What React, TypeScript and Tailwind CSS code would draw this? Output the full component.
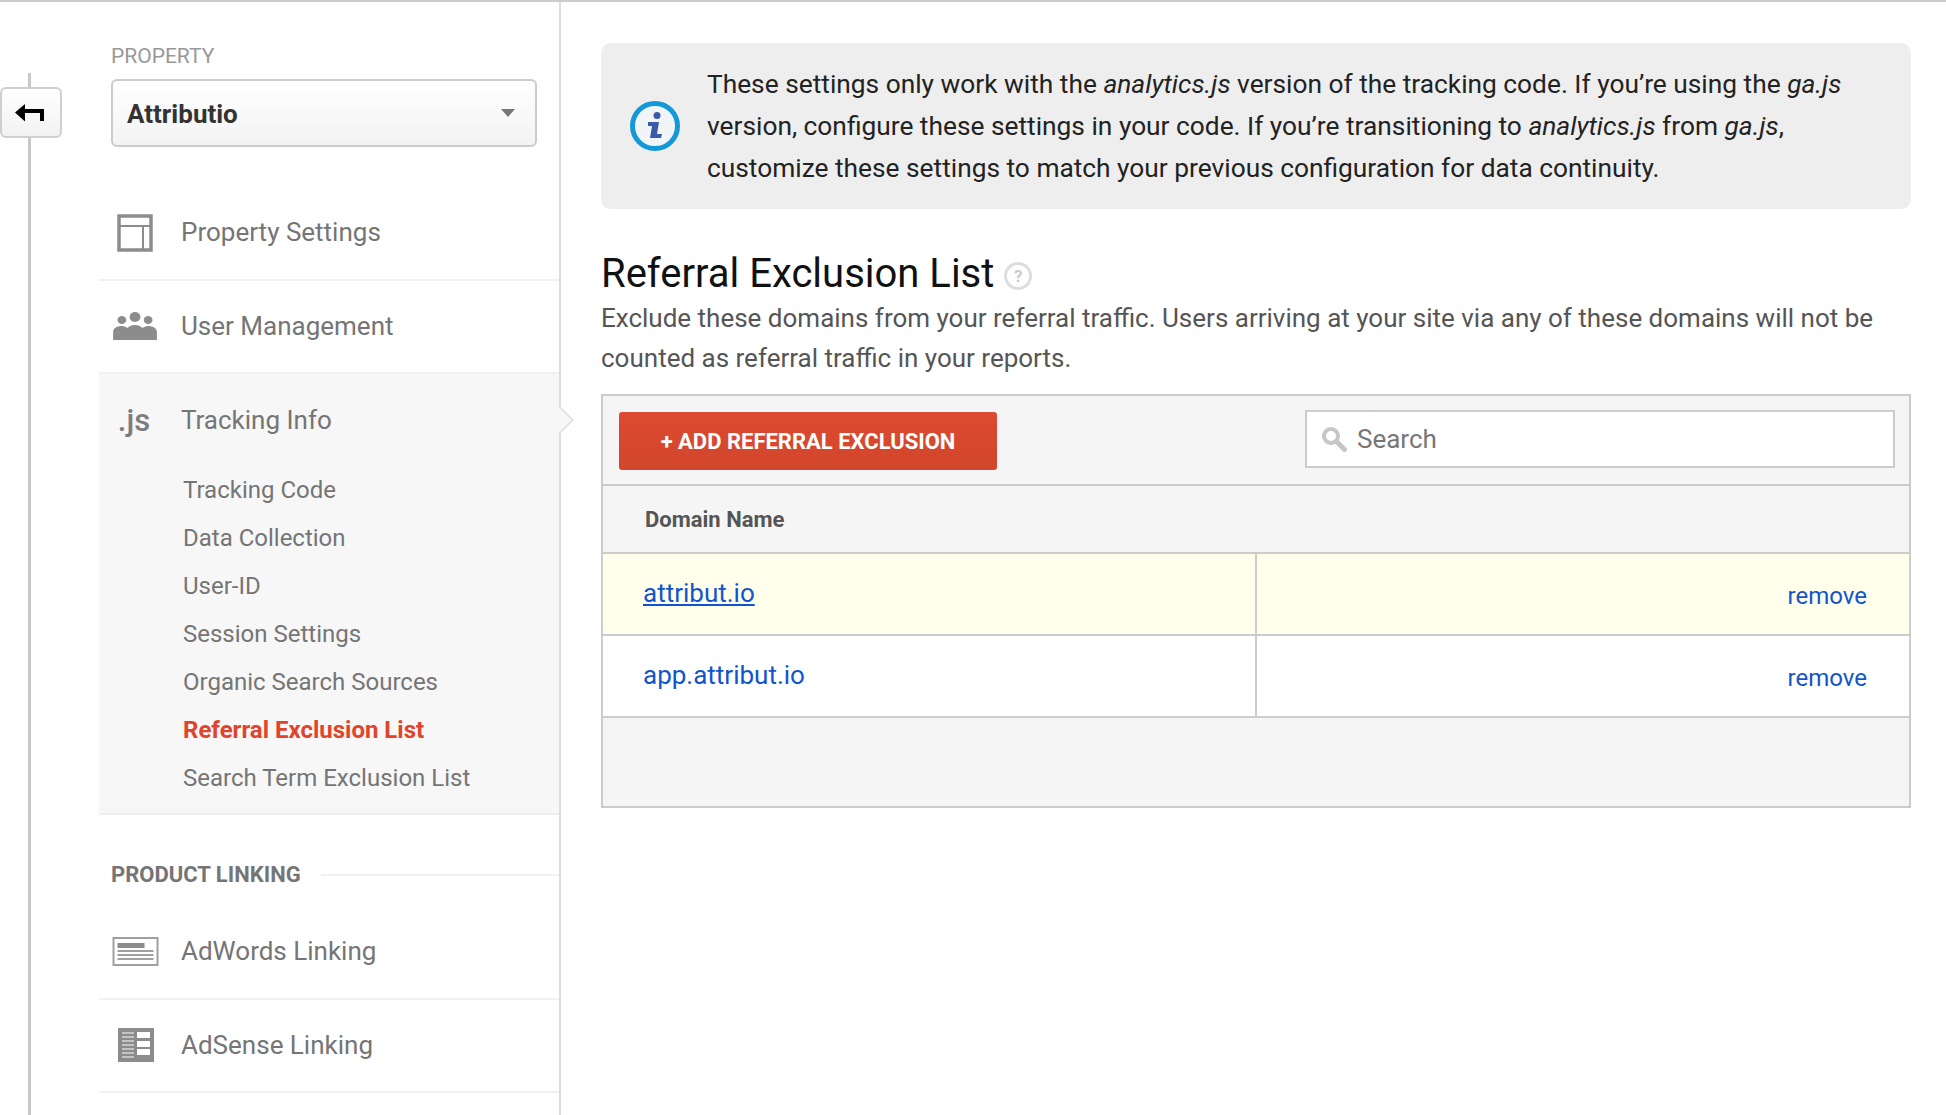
const font = { fontFamily: "Roboto, sans-serif" };

const subItems = [
  "Tracking Code",
  "Data Collection",
  "User-ID",
  "Session Settings",
  "Organic Search Sources",
  "Referral Exclusion List",
  "Search Term Exclusion List",
];

const BackArrow = () => (
  <svg width="31" height="20" viewBox="0 0 31 20" fill="#000" className="-ml-[3px]">
    <path d="M1 9.5 L11 1 V6 H30 V18 H26 V10 H11 V18.5 Z" />
  </svg>
);

const PropertyIcon = () => (
  <svg width="36" height="38" viewBox="0 0 36 38" fill="none" stroke="#8c8c8c" className="ml-[2px]">
    <rect x="2" y="2" width="32" height="34" strokeWidth="3.5" />
    <path d="M2 12 H34 M26 12 V36" strokeWidth="2" />
  </svg>
);

const UsersIcon = () => (
  <svg width="46" height="30" viewBox="0 0 42 30" preserveAspectRatio="none" fill="#8c8c8c" className="ml-[2px]">
    <circle cx="9" cy="9" r="4" />
    <circle cx="21" cy="6" r="5" />
    <circle cx="33" cy="9" r="4" />
    <path d="M1 29 V21 C1 17 5 15 9 15 C11 15 13 16 14 17 C16 15 18 14 21 14 C24 14 26 15 28 17 C29 16 31 15 33 15 C37 15 41 17 41 21 V29 Z" />
  </svg>
);

const AdWordsIcon = () => (
  <svg width="47" height="30" viewBox="0 0 46 30" fill="none" className="ml-[2px]">
    <rect x="1" y="1" width="44" height="27" fill="#fff" stroke="#a0a0a0" strokeWidth="2" />
    <rect x="5" y="6" width="27" height="5" fill="#8c8c8c" />
    <path d="M5 14 H41 M5 18 H41 M5 22 H41" stroke="#a0a0a0" strokeWidth="2" />
  </svg>
);

const AdSenseIcon = () => (
  <svg width="36" height="34" viewBox="0 0 36 34" className="ml-[4px]">
    <rect width="36" height="34" fill="#8c8c8c" />
    <path d="M4 5 H16 M4 9 H16 M4 13 H16 M4 17 H16 M4 21 H16 M4 25 H16 M4 29 H16" stroke="#c4c4c4" strokeWidth="2" />
    <rect x="19" y="4" width="13" height="6" fill="#fff" />
    <rect x="19" y="13" width="13" height="6" fill="#fff" />
    <rect x="19" y="21" width="13" height="6" fill="#fff" />
  </svg>
);

const InfoIcon = () => (
  <svg width="50" height="50" viewBox="0 0 50 50" fill="none">
    <circle cx="25" cy="25" r="22.5" fill="#f2f5f8" stroke="#1398d8" strokeWidth="5" />
    <circle cx="27" cy="14.5" r="3.5" fill="#3b5aa8" />
    <path d="M18 21 H29 L27 33 H32 L31 37 H20 L22 25 H18 Z" fill="#3b5aa8" />
  </svg>
);

const SearchIcon = () => (
  <svg width="26" height="26" viewBox="0 0 26 26" fill="none" stroke="#c6c6c6" strokeLinecap="round">
    <circle cx="10" cy="10" r="7" strokeWidth="4" />
    <path d="M16 16 L23.5 23.5" strokeWidth="5" />
  </svg>
);

const NavRow = ({ icon, label }: { icon: React.ReactNode; label: string }) => (
  <div className="flex h-[93.5px] items-center border-b-2 border-[#f1f1f1]">
    <div className="flex w-[70px] justify-center">{icon}</div>
    <span className="ml-[12px] text-[26px] text-[#757575]">{label}</span>
  </div>
);

export default function App() {
  return (
    <div className="flex h-[1115px] overflow-hidden border-t-2 border-[#cccccc] bg-white" style={font}>
      {/* back rail */}
      <div className="relative flex w-[99px] shrink-0 flex-col">
        <div className="ml-[28px] mt-[71px] w-[3px] flex-1 bg-[#c8c8c8]" />
        <button className="absolute left-0 top-[85px] flex h-[51px] w-[62px] items-center justify-center rounded-[6px] border-2 border-[#cfcfcf] bg-gradient-to-b from-white to-[#f2f2f2]">
          <BackArrow />
        </button>
      </div>

      {/* sidebar */}
      <aside className="relative w-[462px] shrink-0 border-r-2 border-[#dddddd]">
        <div className="pl-[12px] pt-[42px] text-[21px] leading-6 text-[#999999]">PROPERTY</div>
        <div className="ml-[12px] mt-[11px] flex h-[68px] w-[426px] items-center justify-between rounded-[6px] border-2 border-[#cccccc] bg-gradient-to-b from-white to-[#f3f3f3] pl-[14px] pr-[20px]">
          <span className="pt-[2px] text-[26px] font-bold text-[#333333]">Attributio</span>
          <span className="h-0 w-0 border-x-[7px] border-t-[8px] border-x-transparent border-t-[#777777]" />
        </div>

        <div className="mt-[40px]">
          <NavRow icon={<PropertyIcon />} label="Property Settings" />
          <NavRow icon={<UsersIcon />} label="User Management" />
        </div>

        <div className="relative h-[441px] border-b-2 border-[#eeeeee] bg-[#f7f7f7]">
          <div className="flex h-[92px] items-center">
            <div className="flex w-[70px] justify-center text-[31px] font-medium leading-none text-[#7d7d7d]">.js</div>
            <span className="ml-[12px] text-[26px] text-[#757575]">Tracking Info</span>
          </div>
          <ul className="pl-[84px]">
            {subItems.map((item) => (
              <li
                key={item}
                className={
                  item === "Referral Exclusion List"
                    ? "flex h-[48px] items-center text-[24px] font-bold text-[#e0442b]"
                    : "flex h-[48px] items-center text-[24px] text-[#757575]"
                }
              >
                {item}
              </li>
            ))}
          </ul>
          {/* chevron pointing at the content pane */}
          <span className="absolute -right-[11px] top-[36px] h-[20px] w-[20px] rotate-45 border-r-2 border-t-2 border-[#e4e4e4] bg-[#f7f7f7]" />
        </div>

        <div className="flex h-[76px] items-end pl-[12px]">
          <span className="text-[22px] font-bold text-[#757575]">PRODUCT LINKING</span>
          <span className="mb-[15px] ml-[20px] h-[2px] flex-1 bg-[#f1f1f1]" />
        </div>
        <div className="mt-[15px]">
          <NavRow icon={<AdWordsIcon />} label="AdWords Linking" />
          <NavRow icon={<AdSenseIcon />} label="AdSense Linking" />
        </div>
      </aside>

      {/* main */}
      <main className="flex-1 pl-[40px] pr-[35px] pt-[41px]">
        <div className="flex h-[166px] items-center rounded-[10px] bg-[#eeeeee]">
          <div className="flex w-[106px] shrink-0 justify-center pl-[2px]">
            <InfoIcon />
          </div>
          <p className="text-[26.3px] leading-[42px] text-[#222222]">
            These settings only work with the <em>analytics.js</em> version of the tracking code. If you’re using the <em>ga.js</em>
            <br />
            version, configure these settings in your code. If you’re transitioning to <em>analytics.js</em> from <em>ga.js</em>,
            <br />
            customize these settings to match your previous configuration for data continuity.
          </p>
        </div>

        <h1 className="mt-[41px] flex items-center text-[40px] leading-[48px] text-[#111111]">
          Referral Exclusion List
          <span className="ml-[10px] mt-[4px] flex h-[28px] w-[28px] items-center justify-center rounded-full border-[3px] border-[#dddddd] text-[17px] font-bold text-[#cccccc]">?</span>
        </h1>
        <p className="text-[26px] leading-10 text-[#555555]">
          Exclude these domains from your referral traffic. Users arriving at your site via any of these domains will not be
          <br />
          counted as referral traffic in your reports.
        </p>

        <div className="mt-[16px] border-2 border-[#cccccc] bg-[#f5f5f5]">
          <div className="flex h-[90px] items-center justify-between border-b-2 border-[#cccccc] pl-[16px] pr-[14px]">
            <button className="mt-[2px] flex h-[58px] w-[378px] items-center justify-center rounded-[3px] bg-gradient-to-b from-[#dd4a30] to-[#d1462c] text-[22px] font-bold text-white">
              + ADD REFERRAL EXCLUSION
            </button>
            <div className="mb-[2px] flex h-[58px] w-[590px] items-center border-2 border-[#cccccc] bg-white pl-[14px]">
              <SearchIcon />
              <span className="ml-[10px] text-[26px] text-[#777777]">Search</span>
            </div>
          </div>
          <div className="flex h-[68px] items-center border-b-2 border-[#cccccc] pl-[42px] text-[22px] font-bold text-[#555555]">
            Domain Name
          </div>
          <div className="flex h-[82px] border-b-2 border-[#cccccc] bg-[#ffffec]">
            <div className="flex flex-1 items-center border-r-2 border-[#cccccc] pb-[2px] pl-[40px]">
              <a className="text-[26px] text-[#1155cc] underline">attribut.io</a>
            </div>
            <div className="flex w-[652px] items-center justify-end pr-[42px] pt-[4px]">
              <a className="text-[24px] text-[#1155cc]">remove</a>
            </div>
          </div>
          <div className="flex h-[82px] border-b-2 border-[#cccccc] bg-white">
            <div className="flex flex-1 items-center border-r-2 border-[#cccccc] pb-[2px] pl-[40px]">
              <a className="text-[26px] text-[#1155cc]">app.attribut.io</a>
            </div>
            <div className="flex w-[652px] items-center justify-end pr-[42px] pt-[4px]">
              <a className="text-[24px] text-[#1155cc]">remove</a>
            </div>
          </div>
          <div className="h-[88px]" />
        </div>
      </main>
    </div>
  );
}
